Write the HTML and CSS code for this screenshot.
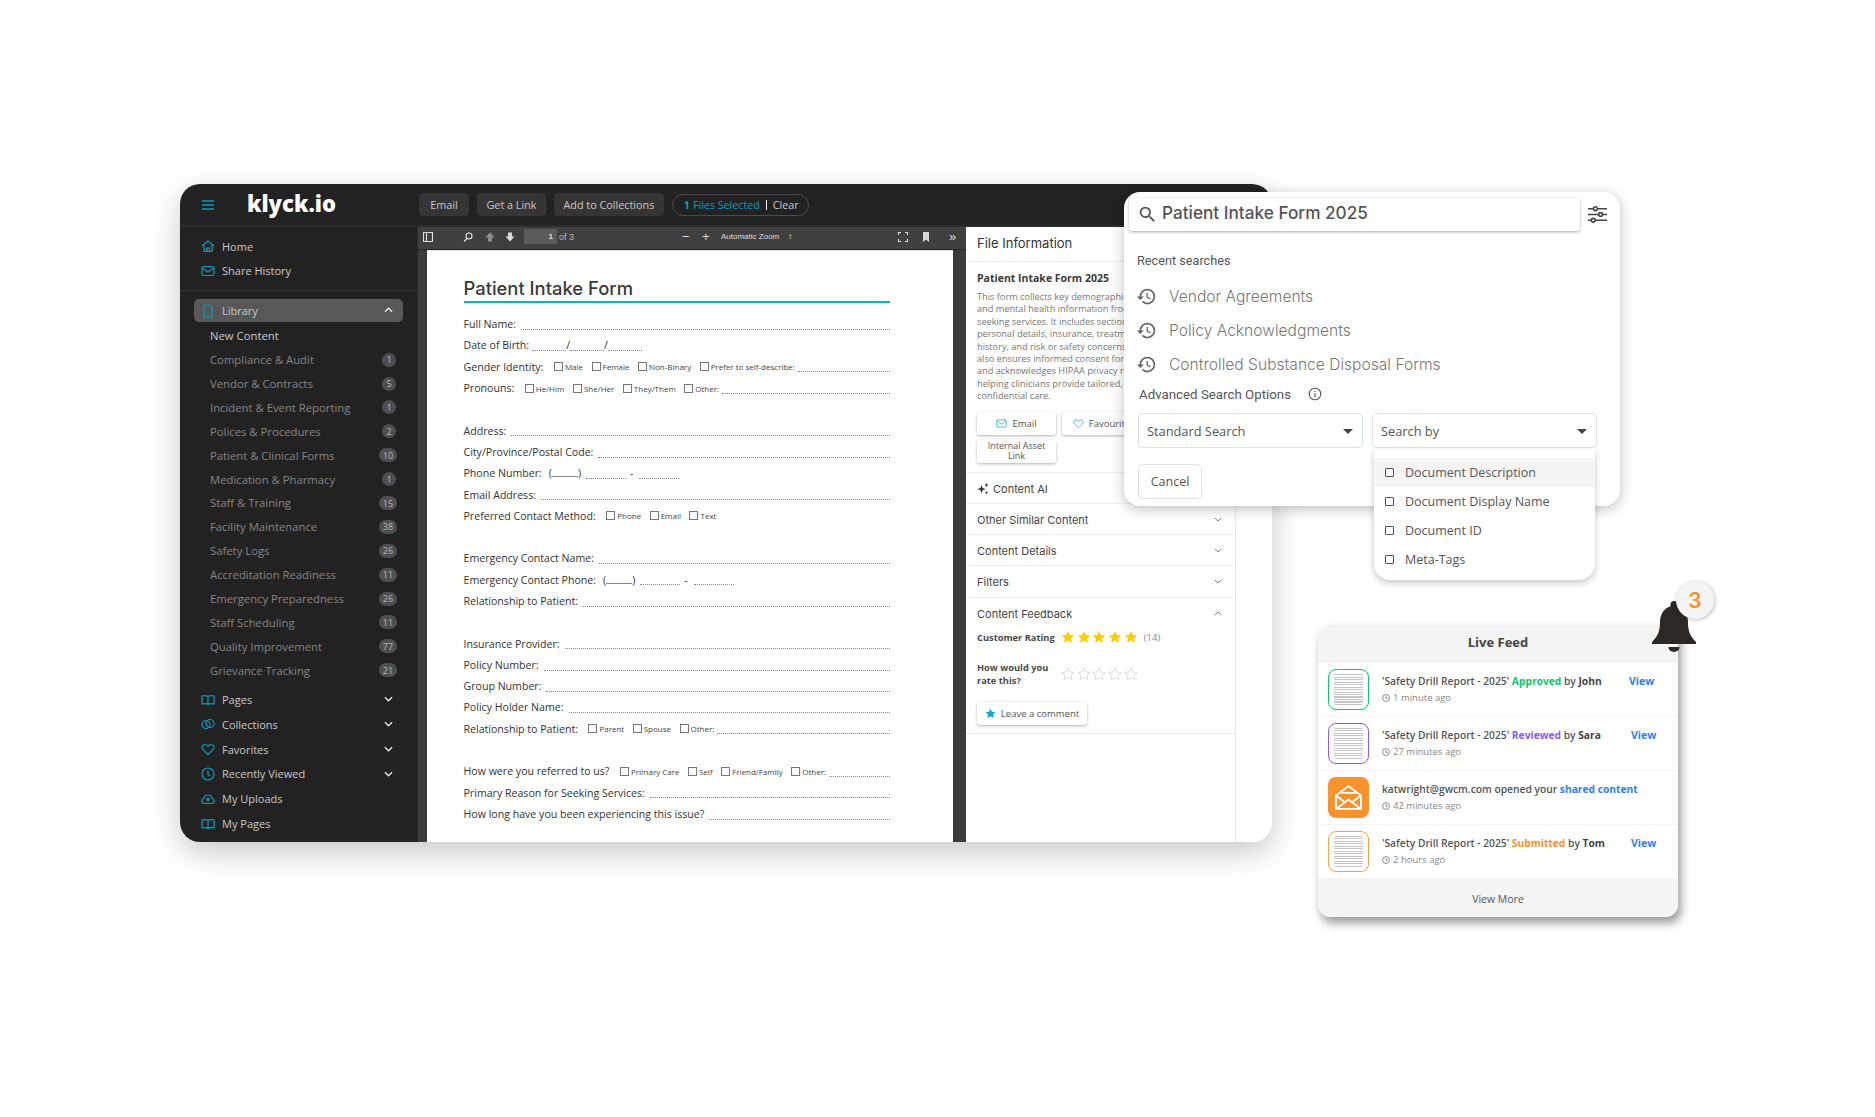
FILE: index.html
```html
<!DOCTYPE html>
<html lang="en">
<head>
  <meta charset="UTF-8" />
  <title>klyck.io</title>
  <link rel="stylesheet" href="styles.css">
</head>
<body>
  <div class="stage">

    <div class="app">
      <div class="topbar">
        <div class="brand">
          <svg class="burger" viewBox="0 0 12 10"><path d="M0 1h12M0 5h12M0 9h12"/></svg>
          <span class="logo">klyck.io</span>
        </div>
        <div class="actions">
          <button class="tbtn">Email</button>
          <button class="tbtn">Get a Link</button>
          <button class="tbtn">Add to Collections</button>
          <div class="selpill"><b>1</b> Files Selected <i></i> <span>Clear</span></div>
        </div>
      </div>

      <div class="appbody">
        <aside class="sidebar">
          <div class="navtop">
            <div class="nav"><svg class="ic" viewBox="0 0 14 14"><path d="M1 7l6-5 6 5M3 6v6.5h8V6M5.6 12.5V9h2.8v3.5"/></svg>Home</div>
            <div class="nav"><svg class="ic" viewBox="0 0 14 14"><rect x="1" y="2.5" width="12" height="9" rx="1.5"/><path d="M1.5 4L7 8l5.5-4"/></svg>Share History</div>
          </div>
          <div class="libpill"><svg class="ic" viewBox="0 0 14 14"><path d="M3 1h5.500L11 3.500V13H3z"/></svg>Library<svg class="chev" viewBox="0 0 10 6"><path d="M1 5l4-4 4 4"/></svg></div>
          <div class="sub sub-new">New Content</div>
          <div class="sub">Compliance &amp; Audit<span class="badge">1</span></div>
          <div class="sub">Vendor &amp; Contracts<span class="badge">5</span></div>
          <div class="sub">Incident &amp; Event Reporting<span class="badge">1</span></div>
          <div class="sub">Polices &amp; Procedures<span class="badge">2</span></div>
          <div class="sub">Patient &amp; Clinical Forms<span class="badge wide">10</span></div>
          <div class="sub">Medication &amp; Pharmacy<span class="badge">1</span></div>
          <div class="sub">Staff &amp; Training<span class="badge wide">15</span></div>
          <div class="sub">Facility Maintenance<span class="badge wide">38</span></div>
          <div class="sub">Safety Logs<span class="badge wide">26</span></div>
          <div class="sub">Accreditation Readiness<span class="badge wide">11</span></div>
          <div class="sub">Emergency Preparedness<span class="badge wide">26</span></div>
          <div class="sub">Staff Scheduling<span class="badge wide">11</span></div>
          <div class="sub">Quality Improvement<span class="badge wide">77</span></div>
          <div class="sub">Grievance Tracking<span class="badge wide">21</span></div>
          <div class="navlow">
            <div class="nav"><svg class="ic" viewBox="0 0 14 14"><path d="M7 3.500C5.500 2.500 3 2.500 1 3v8c2-.5 4.500-.5 6 .5 1.500-1 4-1 6-.5V3c-2-.5-4.500-.5-6 .5zM7 3.500v8"/></svg>Pages<svg class="chev" viewBox="0 0 10 6"><path d="M1 1l4 4 4-4"/></svg></div>
            <div class="nav"><svg class="ic" viewBox="0 0 14 14"><circle cx="5" cy="7.500" r="4"/><circle cx="9" cy="6.500" r="4"/></svg>Collections<svg class="chev" viewBox="0 0 10 6"><path d="M1 1l4 4 4-4"/></svg></div>
            <div class="nav"><svg class="ic" viewBox="0 0 14 14"><path d="M7 12.500L1.800 7.300C.2 5.600 1 2.500 3.800 2.500 5.300 2.500 6.400 3.300 7 4.300 7.600 3.300 8.700 2.500 10.200 2.500 13 2.500 13.800 5.600 12.200 7.300z"/></svg>Favorites<svg class="chev" viewBox="0 0 10 6"><path d="M1 1l4 4 4-4"/></svg></div>
            <div class="nav"><svg class="ic" viewBox="0 0 14 14"><circle cx="7" cy="7" r="6"/><path d="M7 3.500V7.500l2.500 1.500"/></svg>Recently Viewed<svg class="chev" viewBox="0 0 10 6"><path d="M1 1l4 4 4-4"/></svg></div>
            <div class="nav"><svg class="ic" viewBox="0 0 14 14"><path d="M4 11.500H3.500C1.800 11.500.8 10.300.8 9c0-1.300 1-2.400 2.200-2.500C3.300 4.500 5 3 7 3s3.700 1.500 4 3.500c1.200.1 2.200 1.200 2.200 2.500 0 1.300-1 2.500-2.700 2.500H4zM7 10V6.500M5.500 8L7 6.500 8.500 8"/></svg>My Uploads</div>
            <div class="nav"><svg class="ic" viewBox="0 0 14 14"><path d="M7 3.500C5.500 2.500 3 2.500 1 3v8c2-.5 4.500-.5 6 .5 1.500-1 4-1 6-.5V3c-2-.5-4.500-.5-6 .5zM7 3.500v8"/></svg>My Pages</div>
          </div>
        </aside>

        <main class="viewer">
          <div class="pdfbar">
            <svg class="pi pi-side" viewBox="0 0 10 10"><path d="M.5.5h9v9h-9zM3.500.5v9"/></svg>
            <svg class="pi pi-find" viewBox="0 0 10 10"><circle cx="6" cy="4" r="3"/><path d="M4 6.500L1 9.500"/></svg>
            <svg class="pi pi-up solid" viewBox="0 0 10 10"><path d="M5 .5l4.500 5H7v4H3v-4H.5z"/></svg>
            <svg class="pi pi-down solid" viewBox="0 0 10 10"><path d="M5 9.500l4.500-5H7v-4H3v4H.5z"/></svg>
            <span class="pageno">1</span>
            <span class="pageof">of 3</span>
            <span class="zoomminus">&minus;</span>
            <span class="zoomplus">+</span>
            <span class="zoomsel">Automatic Zoom</span>
            <span class="zoomarrow">&#8597;</span>
            <svg class="pi pi-full" viewBox="0 0 10 10"><path d="M.5 3V.5H3M7 .5h2.500V3M9.500 7v2.500H7M3 9.500H.5V7"/></svg>
            <svg class="pi pi-mark solid" viewBox="0 0 10 10"><path d="M2 0h6v10L5 7.500 2 10z"/></svg>
            <span class="more">&raquo;</span>
          </div>
          <div class="page">
            <h1 class="ftitle">Patient Intake Form</h1>
            <div class="frow"><span class="flabel">Full Name:</span><span class="line"></span></div>
            <div class="frow"><span class="flabel">Date of Birth:</span><span class="blank b34"></span><span>/</span><span class="blank b34"></span><span>/</span><span class="blank b34"></span></div>
            <div class="frow"><span class="flabel">Gender Identity:</span><span class="opt"><i class="cb"></i>Male</span><span class="opt"><i class="cb"></i>Female</span><span class="opt"><i class="cb"></i>Non-Binary</span><span class="opt"><i class="cb"></i>Prefer to self-describe:</span><span class="line"></span></div>
            <div class="frow"><span class="flabel">Pronouns:</span><span class="opt"><i class="cb"></i>He/Him</span><span class="opt"><i class="cb"></i>She/Her</span><span class="opt"><i class="cb"></i>They/Them</span><span class="opt"><i class="cb"></i>Other:</span><span class="line"></span></div>
            <div class="fgap"></div>
            <div class="frow"><span class="flabel">Address:</span><span class="line"></span></div>
            <div class="frow"><span class="flabel">City/Province/Postal Code:</span><span class="line"></span></div>
            <div class="frow"><span class="flabel">Phone Number:</span><span class="paren">(<span class="blank b22"></span>)</span><span class="blank b42"></span><span class="dash">-</span><span class="blank b42"></span></div>
            <div class="frow"><span class="flabel">Email Address:</span><span class="line"></span></div>
            <div class="frow"><span class="flabel">Preferred Contact Method:</span><span class="opt"><i class="cb"></i>Phone</span><span class="opt"><i class="cb"></i>Email</span><span class="opt"><i class="cb"></i>Text</span></div>
            <div class="fgap"></div>
            <div class="frow"><span class="flabel">Emergency Contact Name:</span><span class="line"></span></div>
            <div class="frow"><span class="flabel">Emergency Contact Phone:</span><span class="paren">(<span class="blank b22"></span>)</span><span class="blank b42"></span><span class="dash">-</span><span class="blank b42"></span></div>
            <div class="frow"><span class="flabel">Relationship to Patient:</span><span class="line"></span></div>
            <div class="fgap"></div>
            <div class="frow"><span class="flabel">Insurance Provider:</span><span class="line"></span></div>
            <div class="frow"><span class="flabel">Policy Number:</span><span class="line"></span></div>
            <div class="frow"><span class="flabel">Group Number:</span><span class="line"></span></div>
            <div class="frow"><span class="flabel">Policy Holder Name:</span><span class="line"></span></div>
            <div class="frow"><span class="flabel">Relationship to Patient:</span><span class="opt"><i class="cb"></i>Parent</span><span class="opt"><i class="cb"></i>Spouse</span><span class="opt"><i class="cb"></i>Other:</span><span class="line"></span></div>
            <div class="fgap"></div>
            <div class="frow"><span class="flabel">How were you referred to us?</span><span class="opt"><i class="cb"></i>Primary Care</span><span class="opt"><i class="cb"></i>Self</span><span class="opt"><i class="cb"></i>Friend/Family</span><span class="opt"><i class="cb"></i>Other:</span><span class="line"></span></div>
            <div class="frow"><span class="flabel">Primary Reason for Seeking Services:</span><span class="line"></span></div>
            <div class="frow"><span class="flabel">How long have you been experiencing this issue?</span><span class="line"></span></div>
          </div>
        </main>

        <section class="info">
          <div class="info-head">File Information</div>
          <div class="info-main">
            <h3 class="info-title">Patient Intake Form 2025</h3>
            <p class="info-text">This form collects key demographic, medical,<br>and mental health information from individuals<br>seeking services. It includes sections for<br>personal details, insurance, treatment<br>history, and risk or safety concerns. It<br>also ensures informed consent for treatment<br>and acknowledges HIPAA privacy rights,<br>helping clinicians provide tailored,<br>confidential care.</p>
            <div class="info-btns">
              <span class="ibtn"><svg class="ic-sm" viewBox="0 0 14 14"><rect x="1" y="2.500" width="12" height="9" rx="1"/><path d="M1.500 3.500L7 8l5.500-4.500"/></svg>Email</span>
              <span class="ibtn"><svg class="ic-sm" viewBox="0 0 14 14"><path d="M7 12.500L1.800 7.300C.2 5.600 1 2.500 3.800 2.500 5.300 2.500 6.400 3.300 7 4.300 7.600 3.300 8.700 2.500 10.200 2.500 13 2.500 13.800 5.600 12.200 7.300z"/></svg>Favourite</span>
              <span class="ibtn ibtn-2">Internal Asset<br>Link</span>
            </div>
          </div>
          <div class="acc acc-ai"><svg class="spark" viewBox="0 0 12 12"><path d="M4.500 2l1.100 3 3 1.100-3 1.100-1.100 3-1.100-3-3-1.100 3-1.100zM9.500 0l.6 1.500 1.500.6-1.500.6-.6 1.500-.6-1.500-1.500-.6 1.500-.6zM9.500 8l.5 1.200 1.200.5-1.200.5-.5 1.200-.5-1.200-1.200-.5 1.200-.5z"/></svg>Content AI</div>
          <div class="acc">Other Similar Content<svg class="achev" viewBox="0 0 10 6"><path d="M1 1l4 4 4-4"/></svg></div>
          <div class="acc">Content Details<svg class="achev" viewBox="0 0 10 6"><path d="M1 1l4 4 4-4"/></svg></div>
          <div class="acc">Filters<svg class="achev" viewBox="0 0 10 6"><path d="M1 1l4 4 4-4"/></svg></div>
          <div class="feedback">
            <div class="fb-head">Content Feedback<svg class="achev" viewBox="0 0 10 6"><path d="M1 5l4-4 4 4"/></svg></div>
            <div class="fb-rate">
              <span class="fb-label">Customer Rating</span>
              <span class="stars on"><svg viewBox="0 0 24 24"><path d="M12 1.500l3.200 6.900 7.500.9-5.500 5.100 1.500 7.400L12 18.100l-6.700 3.700 1.500-7.400L1.300 9.300l7.500-.9z"/></svg><svg viewBox="0 0 24 24"><path d="M12 1.500l3.200 6.900 7.500.9-5.500 5.100 1.500 7.400L12 18.100l-6.700 3.700 1.500-7.400L1.300 9.300l7.500-.9z"/></svg><svg viewBox="0 0 24 24"><path d="M12 1.500l3.200 6.900 7.500.9-5.500 5.100 1.500 7.400L12 18.100l-6.700 3.700 1.500-7.400L1.300 9.300l7.500-.9z"/></svg><svg viewBox="0 0 24 24"><path d="M12 1.500l3.200 6.900 7.500.9-5.500 5.100 1.500 7.400L12 18.100l-6.700 3.700 1.500-7.400L1.300 9.300l7.500-.9z"/></svg><svg viewBox="0 0 24 24"><path d="M12 1.500l3.200 6.900 7.500.9-5.500 5.100 1.500 7.400L12 18.100l-6.700 3.700 1.500-7.400L1.300 9.300l7.500-.9z"/></svg></span>
              <span class="fb-count">(14)</span>
            </div>
            <div class="fb-rate fb-ask">
              <span class="fb-label">How would you<br>rate this?</span>
              <span class="stars off"><svg viewBox="0 0 24 24"><path d="M12 1.500l3.200 6.900 7.500.9-5.500 5.100 1.500 7.400L12 18.100l-6.700 3.700 1.500-7.400L1.300 9.300l7.500-.9z"/></svg><svg viewBox="0 0 24 24"><path d="M12 1.500l3.200 6.900 7.500.9-5.500 5.100 1.500 7.400L12 18.100l-6.700 3.700 1.500-7.400L1.300 9.300l7.500-.9z"/></svg><svg viewBox="0 0 24 24"><path d="M12 1.500l3.200 6.900 7.500.9-5.500 5.100 1.500 7.400L12 18.100l-6.700 3.700 1.500-7.400L1.300 9.300l7.500-.9z"/></svg><svg viewBox="0 0 24 24"><path d="M12 1.500l3.200 6.900 7.500.9-5.500 5.100 1.500 7.400L12 18.100l-6.700 3.700 1.500-7.400L1.300 9.300l7.500-.9z"/></svg><svg viewBox="0 0 24 24"><path d="M12 1.500l3.200 6.900 7.500.9-5.500 5.100 1.500 7.400L12 18.100l-6.700 3.700 1.500-7.400L1.300 9.300l7.500-.9z"/></svg></span>
            </div>
            <span class="ibtn comment"><svg viewBox="0 0 24 24"><path d="M12 1.500l3.200 6.900 7.500.9-5.500 5.100 1.500 7.400L12 18.100l-6.700 3.700 1.500-7.400L1.300 9.300l7.500-.9z"/></svg>Leave a comment</span>
          </div>
        </section>
        <div class="filler"></div>
      </div>
    </div>

    <div class="search">
      <div class="search-top">
        <div class="search-input">
          <svg class="s-ic" viewBox="0 0 24 24"><path d="M15.500 14h-.79l-.28-.27A6.471 6.471 0 0 0 16 9.500 6.500 6.500 0 1 0 9.500 16c1.610 0 3.090-.59 4.230-1.570l.27.28v.79l5 4.990L20.490 19l-4.990-5zm-6 0C7.010 14 5 11.990 5 9.500S7.010 5 9.500 5 14 7.010 14 9.500 11.990 14 9.500 14z"/></svg>
          <span>Patient Intake Form 2025</span>
        </div>
        <svg class="s-tune" viewBox="0 0 18 16"><path d="M0 2.500h5M9 2.500h9M0 8h10M14 8h4M0 13.500h3M7 13.500h11"/><circle cx="7" cy="2.500" r="1.800"/><circle cx="12" cy="8" r="1.800"/><circle cx="5" cy="13.500" r="1.800"/></svg>
      </div>
      <div class="recent-label">Recent searches</div>
      <div class="recent"><svg class="hist" viewBox="0 0 24 24"><path d="M13 3a9 9 0 0 0-9 9H1l3.890 3.890.07.14L9 12H6c0-3.870 3.130-7 7-7s7 3.130 7 7-3.130 7-7 7c-1.930 0-3.680-.79-4.940-2.060l-1.420 1.420A8.954 8.954 0 0 0 13 21a9 9 0 0 0 0-18zm-1 5v5l4.280 2.540.72-1.210-3.500-2.080V8H12z"/></svg>Vendor Agreements</div>
      <div class="recent"><svg class="hist" viewBox="0 0 24 24"><path d="M13 3a9 9 0 0 0-9 9H1l3.890 3.890.07.14L9 12H6c0-3.870 3.130-7 7-7s7 3.130 7 7-3.130 7-7 7c-1.930 0-3.680-.79-4.940-2.060l-1.420 1.420A8.954 8.954 0 0 0 13 21a9 9 0 0 0 0-18zm-1 5v5l4.280 2.540.72-1.210-3.500-2.080V8H12z"/></svg>Policy Acknowledgments</div>
      <div class="recent"><svg class="hist" viewBox="0 0 24 24"><path d="M13 3a9 9 0 0 0-9 9H1l3.890 3.890.07.14L9 12H6c0-3.870 3.130-7 7-7s7 3.130 7 7-3.130 7-7 7c-1.930 0-3.680-.79-4.940-2.060l-1.420 1.420A8.954 8.954 0 0 0 13 21a9 9 0 0 0 0-18zm-1 5v5l4.280 2.540.72-1.210-3.500-2.080V8H12z"/></svg>Controlled Substance Disposal Forms</div>
      <div class="adv">Advanced Search Options<svg class="info-ic" viewBox="0 0 14 14"><circle cx="7" cy="7" r="5.800"/><path d="M7 6.200v4M7 3.800v1.200"/></svg></div>
      <div class="selects">
        <div class="select">Standard Search<i class="caret"></i></div>
        <div class="select">Search by<i class="caret"></i>
          <div class="dropdown">
            <div class="ddrow hover"><i class="ddcb"></i>Document Description</div>
            <div class="ddrow"><i class="ddcb"></i>Document Display Name</div>
            <div class="ddrow"><i class="ddcb"></i>Document ID</div>
            <div class="ddrow"><i class="ddcb"></i>Meta-Tags</div>
          </div>
        </div>
      </div>
      <button class="cancel">Cancel</button>
    </div>

    <div class="feed">
      <div class="feed-head">Live Feed</div>
      <div class="feed-row">
        <div class="thumb t-green"></div>
        <div class="feed-text">
          <div class="feed-line">'Safety Drill Report - 2025' <b class="green">Approved</b> by <b>John</b></div>
          <div class="feed-time"><svg viewBox="0 0 14 14"><circle cx="7" cy="7" r="6"/><path d="M7 3.500V7.500h3"/></svg>1 minute ago</div>
        </div>
        <span class="view v1">View</span>
      </div>
      <div class="feed-row">
        <div class="thumb t-purple"></div>
        <div class="feed-text">
          <div class="feed-line">'Safety Drill Report - 2025' <b class="purple">Reviewed</b> by <b>Sara</b></div>
          <div class="feed-time"><svg viewBox="0 0 14 14"><circle cx="7" cy="7" r="6"/><path d="M7 3.500V7.500h3"/></svg>27 minutes ago</div>
        </div>
        <span class="view">View</span>
      </div>
      <div class="feed-row">
        <div class="thumb-mail"><svg viewBox="0 0 28 26"><path d="M2 11L14 2l12 9v13H2zM2 11l9 7M26 11l-9 7M2 24l12-9 12 9M7 8.500h14"/></svg></div>
        <div class="feed-text">
          <div class="feed-line">katwright@gwcm.com opened your <b class="blue">shared content</b></div>
          <div class="feed-time"><svg viewBox="0 0 14 14"><circle cx="7" cy="7" r="6"/><path d="M7 3.500V7.500h3"/></svg>42 minutes ago</div>
        </div>
      </div>
      <div class="feed-row last">
        <div class="thumb t-orange"></div>
        <div class="feed-text">
          <div class="feed-line">'Safety Drill Report - 2025' <b class="orange">Submitted</b> by <b>Tom</b></div>
          <div class="feed-time"><svg viewBox="0 0 14 14"><circle cx="7" cy="7" r="6"/><path d="M7 3.500V7.500h3"/></svg>2 hours ago</div>
        </div>
        <span class="view">View</span>
      </div>
      <div class="feed-more">View More</div>
    </div>

    <svg class="bell" viewBox="0 0 44 52"><path d="M22 1a3.500 3.500 0 0 1 3.500 3.500v1.800C32 8.500 36 14.500 36 22c0 9 2 14 8 20v2H0v-2c6-6 8-11 8-20C8 14.500 12 8.500 18.500 6.300V4.500A3.500 3.500 0 0 1 22 1z"/><path d="M16.500 47h11a5.500 5 0 0 1-11 0z"/></svg>
    <div class="bellcount">3</div>
  </div>
</body>
</html>
```

FILE: styles.css
```css
* {
  box-sizing: border-box;
}
body {
  margin: 0;
  background: #fff;
  font-family: "Open Sans", Arial, sans-serif;
}
.stage {
  position: relative;
  width: 1875px;
  height: 1117px;
  overflow: hidden;
}

/* main window */
.app {
  position: absolute;
  left: 180px;
  top: 184px;
  width: 1092px;
  height: 658px;
  border-radius: 20px;
  overflow: hidden;
  background: #fff;
  box-shadow: 0 10px 30px rgba(0,0,0,0.22);
  display: flex;
  flex-direction: column;
}
.topbar {
  height: 43px;
  background: #222;
  display: flex;
  flex: none;
  border-bottom: 2px solid #2c2c2c;
}
.brand {
  width: 237px;
  display: flex;
  align-items: center;
  padding-left: 22px;
}
.burger {
  width: 12px;
  height: 10px;
  fill: none;
  stroke: #0a9cbf;
  stroke-width: 1.3;
}
.logo {
  margin-left: 33px;
  color: #fff;
  font-weight: 800;
  font-size: 22px;
  position: relative;
  top: -2px;
}
.actions {
  display: flex;
  align-items: center;
  gap: 8px;
  padding-left: 2px;
}
.tbtn {
  height: 23px;
  min-width: 50px;
  padding: 0 9.5px;
  border: none;
  border-radius: 4px;
  background: #353535;
  color: #c8c8c8;
  font: 10.8px "Open Sans", Arial, sans-serif;
}
.selpill {
  height: 22px;
  width: 137px;
  border: 1px solid #4a4a4a;
  border-radius: 11px;
  display: flex;
  align-items: center;
  gap: 3px;
  padding-left: 11px;
  color: #0a9cbf;
  font-size: 10.7px;
  white-space: nowrap;
}
.selpill i {
  width: 1px;
  height: 10px;
  margin: 0 3px;
  background: #eee;
}
.selpill span {
  color: #ccc;
}
.appbody {
  flex: 1;
  display: flex;
  min-height: 0;
}

/* sidebar */
.sidebar {
  width: 237px;
  background: #222;
  flex: none;
  color: #c8c8c8;
  font-size: 11px;
}
.navtop {
  padding: 7px 0;
  border-bottom: 1px solid #333;
}
.nav {
  height: 24.6px;
  display: flex;
  align-items: center;
  padding-left: 21px;
  position: relative;
}
.navlow .nav {
  height: 24.8px;
}
.ic {
  width: 14px;
  height: 14px;
  margin-right: 7px;
  fill: none;
  stroke: #0a9cbf;
  stroke-width: 1.2;
}
.libpill {
  margin: 8px 14px 2px;
  height: 23px;
  padding-left: 7px;
  border-radius: 5px;
  background: #585858;
  display: flex;
  align-items: center;
  position: relative;
}
.chev {
  position: absolute;
  width: 9px;
  height: 6px;
  fill: none;
  stroke: #e8e8e8;
  stroke-width: 1.5;
}
.libpill .chev {
  right: 10px;
  top: 8px;
}
.nav .chev {
  left: 204px;
  top: 9px;
}
.sub {
  height: 23.9px;
  display: flex;
  align-items: center;
  padding-left: 30px;
  position: relative;
  color: #858585;
  font-size: 11.3px;
}
.sub-new {
  height: 23.5px;
  color: #c8c8c8;
}
.badge {
  position: absolute;
  left: 202px;
  top: 5px;
  width: 14px;
  height: 14px;
  border-radius: 50%;
  background: #4f4f4f;
  color: #bbb;
  font-size: 9px;
  display: flex;
  align-items: center;
  justify-content: center;
}
.badge.wide {
  left: 199px;
  width: 18px;
  border-radius: 7px;
}
.navlow {
  margin-top: 5px;
}

/* pdf viewer */
.viewer {
  width: 549px;
  flex: none;
  background: #3b3b3b;
  border-left: 1px solid #2c2c2c;
  overflow: hidden;
}
.pdfbar {
  height: 22px;
  position: relative;
  background: #404040;
  box-shadow: 0 1px 1px #2a2a2a;
  color: #ddd;
}
.pi {
  position: absolute;
  top: 5px;
  width: 10px;
  height: 10px;
  fill: none;
  stroke: #e2e2e2;
  stroke-width: 1.1;
}
.pi.solid {
  fill: #d8d8d8;
  stroke: none;
}
.pi-side { left: 5px; }
.pi-find { left: 45px; }
.pi-up { left: 67px; fill: #8d8d8d !important; }
.pi-down { left: 87px; }
.pi-full { left: 480px; }
.pi-mark { left: 503px; }
.pageno, .pageof, .zoomminus, .zoomplus, .zoomsel, .zoomarrow, .more {
  position: absolute;
  top: -1px;
  line-height: 22px;
  font-family: "Liberation Sans", Arial, sans-serif;
  font-size: 8px;
}
.pageno {
  left: 106px;
  top: 2px;
  width: 33px;
  height: 15px;
  line-height: 15px;
  padding-right: 4px;
  background: #5b5b5b;
  text-align: right;
  font-weight: 700;
}
.pageof { left: 141px; color: #bbb; font-size: 9px; }
.zoomminus { left: 264px; font-size: 13px; }
.zoomplus { left: 284px; font-size: 13px; }
.zoomsel { left: 303px; font-size: 8px; }
.zoomarrow { left: 370px; }
.more { left: 531px; font-size: 13px; }
.page {
  margin-left: 9px;
  width: 526px;
  height: 620px;
  background: #fff;
  padding: 27px 63px 0 36.5px;
  color: #333;
  font-size: 10.6px;
}
.ftitle {
  margin: 0 0 10.5px;
  height: 27px;
  border-bottom: 2px solid #06b3d8;
  font: 500 18.4px/24px Inter, sans-serif;
  color: #3a3a3a;
}
.frow {
  height: 21.3px;
  display: flex;
  align-items: center;
  white-space: nowrap;
}
.fgap {
  height: 21.3px;
}
.flabel {
  margin-right: 3px;
}
.line {
  flex: 1;
  align-self: flex-end;
  margin: 0 0 5px 2px;
  border-bottom: 1px dotted #888;
}
.blank {
  align-self: flex-end;
  margin-bottom: 5px;
  border-bottom: 1px dotted #888;
  display: inline-block;
}
.paren .blank {
  margin-bottom: 0;
  border-bottom-style: solid;
}
.b34 { width: 34px; }
.b22 { width: 26px; }
.b42 { width: 40px; margin-left: 5px; }
.paren { margin-left: 4px; }
.dash { margin: 0 1px 0 4px; }
.opt {
  display: inline-flex;
  align-items: center;
  margin-left: 7.5px;
  margin-right: 1px;
  font-size: 8px;
  color: #444;
}
.cb {
  width: 9px;
  height: 9px;
  margin-right: 2px;
  border: 1px solid #777;
}

/* file info panel */
.info {
  width: 270px;
  flex: none;
  background: #fff;
  border-right: 1px solid #e6e6e6;
  color: #444;
  position: relative;
}
.info-head {
  height: 35px;
  padding: 7px 0 0 11px;
  border-bottom: 1px solid #eee;
  font: 13px/18px Inter, sans-serif;
  color: #333;
}
.info-main {
  padding: 9px 0 0 11px;
  height: 211px;
  border-bottom: 1px solid #eee;
}
.info-title {
  margin: 0 0 5px;
  font-size: 10.5px;
  line-height: 15px;
  font-weight: 700;
  color: #3a3a3a;
}
.info-text {
  margin: 0;
  font-size: 9.2px;
  line-height: 12.4px;
  color: #777;
  white-space: nowrap;
}
.info-btns {
  margin-top: 9px;
  display: flex;
  flex-wrap: wrap;
  gap: 5px 6px;
  width: 170px;
}
.ibtn {
  display: inline-flex;
  align-items: center;
  justify-content: center;
  width: 79px;
  height: 23px;
  border-radius: 3px;
  background: #fff;
  box-shadow: 0 1px 3px rgba(0,0,0,0.3);
  font-size: 9.5px;
  color: #555;
}
.ibtn-2 {
  text-align: center;
  line-height: 10px;
  font-size: 9px;
}
.ic-sm {
  width: 11px;
  height: 11px;
  margin-right: 5px;
  fill: none;
  stroke: #42b4d8;
  stroke-width: 1.2;
}
.acc {
  height: 31.2px;
  display: flex;
  align-items: center;
  padding: 2px 0 0 11px;
  border-bottom: 1px solid #eee;
  font: 11px Inter, sans-serif;
  color: #444;
  position: relative;
}
.acc-ai {
  height: 31px;
}
.spark {
  width: 12px;
  height: 12px;
  margin-right: 4px;
  fill: #333;
}
.achev {
  position: absolute;
  left: 248px;
  top: 13px;
  width: 8px;
  height: 5px;
  fill: none;
  stroke: #777;
  stroke-width: 1.2;
}
.feedback {
  position: relative;
  padding-left: 11px;
  height: 136px;
  border-bottom: 1px solid #e6e6e6;
}
.fb-head {
  padding-top: 8px;
  font: 11px/16px Inter, sans-serif;
  color: #444;
}
.fb-rate {
  margin-top: 7px;
  display: flex;
  align-items: center;
  height: 17px;
}
.fb-ask {
  margin-top: 13px;
  height: 30px;
}
.fb-label {
  width: 84px;
  font-size: 9.3px;
  line-height: 13px;
  font-weight: 700;
  color: #4a4a4a;
}
.stars {
  display: flex;
  gap: 1.7px;
}
.stars svg {
  width: 14px;
  height: 14px;
}
.stars.on svg {
  fill: #ffcc00;
}
.stars.off svg {
  fill: none;
  stroke: #d5d5d5;
  stroke-width: 1.5;
}
.fb-count {
  margin-left: 6px;
  font-size: 9.5px;
  color: #888;
}
.comment {
  position: absolute;
  left: 11px;
  top: 104px;
  width: 110px;
}
.comment svg {
  width: 11px;
  height: 11px;
  margin-right: 5px;
  fill: #0fa7d2;
}
.filler {
  flex: 1;
  background: #fff;
}

/* search popup */
.search {
  position: absolute;
  left: 1124px;
  top: 192px;
  width: 496px;
  height: 314px;
  padding: 6px 0 0 5px;
  border-radius: 16px;
  background: #fff;
  box-shadow: 0 3px 14px rgba(0,0,0,0.25);
}
.search-top {
  display: flex;
  align-items: center;
}
.search-input {
  width: 451px;
  height: 33px;
  display: flex;
  align-items: center;
  padding-left: 8px;
  border-radius: 3px;
  box-shadow: 0 1px 3px rgba(0,0,0,0.35);
  font: 500 17.2px Inter, sans-serif;
  color: #555;
}
.search-input span {
  position: relative;
  top: -2px;
}
.s-ic {
  width: 21px;
  height: 21px;
  margin-right: 4px;
  fill: #555;
}
.s-tune {
  width: 19px;
  height: 17px;
  margin-left: 8px;
  fill: #fff;
  stroke: #444;
  stroke-width: 1.5;
}
.recent-label {
  margin: 21px 0 0 8px;
  height: 18px;
  font: 12.7px/18px Roboto, sans-serif;
  color: #555;
}
.recent {
  height: 34px;
  display: flex;
  align-items: center;
  padding-left: 7px;
  font: 300 15.6px Inter, sans-serif;
  color: #777;
}
.recent-label + .recent {
  margin-top: 9px;
}
.hist {
  width: 21px;
  height: 21px;
  margin-right: 12px;
  fill: #666;
}
.adv {
  height: 26px;
  margin: 0 0 0 10px;
  display: flex;
  align-items: center;
  font: 13.3px Roboto, sans-serif;
  color: #555;
}
.info-ic {
  width: 14px;
  height: 14px;
  margin-left: 17px;
  fill: none;
  stroke: #555;
  stroke-width: 1.1;
}
.selects {
  display: flex;
  gap: 9px;
  margin: 6px 0 0 9px;
}
.select {
  position: relative;
  width: 225px;
  height: 35px;
  display: flex;
  align-items: center;
  padding-left: 8px;
  border: 1px solid #dfe2ea;
  border-radius: 4px;
  font-size: 12.8px;
  color: #555;
}
.caret {
  position: absolute;
  right: 9px;
  top: 15px;
  border: 5px solid transparent;
  border-top-color: #444;
  border-bottom: none;
}
.dropdown {
  position: absolute;
  left: 1px;
  top: 35px;
  width: 221px;
  height: 131px;
  padding-top: 9px;
  background: #fff;
  border-radius: 0 0 16px 16px;
  box-shadow: 0 3px 7px rgba(0,0,0,0.22);
  z-index: 2;
}
.ddrow {
  height: 29px;
  display: flex;
  align-items: center;
  padding-left: 11px;
  font-size: 12.5px;
  color: #555;
}
.ddrow.hover {
  background: #f5f5f5;
}
.ddcb {
  width: 9px;
  height: 9px;
  margin-right: 11px;
  border: 1px solid #555;
  border-radius: 1px;
}
.cancel {
  display: block;
  margin: 16px 0 0 9px;
  width: 64px;
  height: 35px;
  background: #fff;
  border: 1px solid #dfe2ea;
  border-radius: 5px;
  font: 12.5px "Open Sans", Arial, sans-serif;
  color: #555;
}

/* live feed */
.feed {
  position: absolute;
  left: 1318px;
  top: 625px;
  width: 360px;
  height: 292px;
  border-radius: 12px;
  overflow: hidden;
  background: #f4f4f4;
  box-shadow: 3px 6px 10px rgba(0,0,0,0.4);
}
.feed-head {
  height: 38px;
  display: flex;
  align-items: center;
  justify-content: center;
  padding-bottom: 4px;
  font-size: 13px;
  font-weight: 700;
  color: #444;
}
.feed-row {
  height: 53px;
  margin-bottom: 1px;
  background: #fff;
  display: flex;
  align-items: center;
  padding-left: 10px;
  position: relative;
}
.feed-row.last {
  margin-bottom: 0;
}
.thumb, .thumb-mail {
  flex: none;
  width: 41px;
  height: 41px;
  border-radius: 8px;
}
.thumb {
  border: 1px solid;
  padding: 4px 5px;
  background: repeating-linear-gradient(#c4c4c4 0 1px, #fff 1px 2.5px) content-box;
}
.t-green { border-color: #12c46b; }
.t-purple { border-color: #8a5cf6; }
.t-orange { border-color: #f7a04a; }
.thumb-mail {
  background: #f7922c;
  padding: 6px;
}
.thumb-mail svg {
  width: 29px;
  height: 29px;
  fill: none;
  stroke: #fff;
  stroke-width: 1.8;
}
.feed-text {
  margin-left: 13px;
}
.feed-line {
  font-size: 10.25px;
  line-height: 15px;
  font-weight: 600;
  color: #555;
  white-space: nowrap;
}
.feed-line b {
  font-weight: 700;
  color: #444;
}
.feed-line .green { color: #12c46b; }
.feed-line .purple { color: #8a5cf6; }
.feed-line .orange { color: #f7922c; }
.feed-line .blue { color: #2f80f0; }
.feed-time {
  display: flex;
  align-items: center;
  margin-top: 2px;
  font-size: 9.5px;
  line-height: 14px;
  color: #888;
}
.feed-time svg {
  width: 8px;
  height: 8px;
  margin-right: 3px;
  fill: none;
  stroke: #666;
  stroke-width: 1.3;
}
.view {
  position: absolute;
  left: 313px;
  top: 11px;
  font-size: 10.5px;
  font-weight: 700;
  color: #2f80f0;
}
.view.v1 {
  left: 311px;
}
.feed-more {
  height: 40px;
  padding-top: 2px;
  display: flex;
  align-items: center;
  justify-content: center;
  font-size: 10.5px;
  color: #555;
}
.bell {
  position: absolute;
  left: 1652px;
  top: 600px;
  width: 44px;
  height: 52px;
  fill: #2b2826;
}
.bellcount {
  position: absolute;
  left: 1676px;
  top: 581px;
  width: 38px;
  height: 38px;
  border-radius: 50%;
  background: #f4f4f4;
  box-shadow: 1px 1px 4px rgba(0,0,0,0.25);
  display: flex;
  align-items: center;
  justify-content: center;
  font: 600 21px Inter, sans-serif;
  color: #f7922c;
}
```
